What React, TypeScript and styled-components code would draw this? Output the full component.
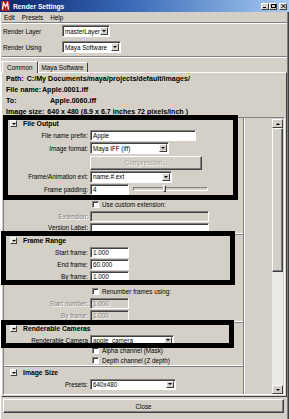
import React from 'react'
import styled, { createGlobalStyle } from 'styled-components'

const GlobalStyle = createGlobalStyle`
  html, body {
    margin: 0;
    padding: 0;
    background: #d4d0c8;
  }
  body {
    font-family: "Liberation Sans", Arial, sans-serif;
    font-size: 6.3px;
    color: #000;
  }
  * {
    box-sizing: border-box;
  }
`

const Window = styled.div`
  position: relative;
  width: 289px;
  height: 419px;
  overflow: hidden;
  display: flex;
  flex-direction: column;
  background: #d4d0c8;
  box-shadow: inset 1px 0 #fff, inset -1px 0 #404040, inset -2px 0 #808080;
`

const TitleBar = styled.div`
  height: 12px;
  flex: none;
  display: flex;
  align-items: center;
  padding: 0 2px 0 1px;
  background: linear-gradient(to right, #0a246a, #3a6ab8 45%, #a6caf0);
  color: #fff;
  font-weight: bold;
  font-size: 6.7px;
`

const TitleText = styled.span`
  margin-left: 3px;
  flex: 1;
`

const TitleButton = styled.div<{ $gap?: number }>`
  width: 8px;
  height: 7px;
  margin-left: ${p => p.$gap ?? 0}px;
  background: #d4d0c8;
  border-top: 1px solid #fff;
  border-left: 1px solid #fff;
  border-right: 1px solid #404040;
  border-bottom: 1px solid #404040;
  display: flex;
  align-items: center;
  justify-content: center;
`

const MenuBar = styled.div`
  height: 10px;
  flex: none;
  display: flex;
  align-items: center;
  gap: 7px;
  padding-left: 4px;
`

const Etched = styled.div`
  height: 2px;
  flex: none;
  margin: 0 2px;
  border-top: 1px solid #808080;
  border-bottom: 1px solid #fff;
`

const TopForm = styled.div`
  flex: none;
  display: flex;
  flex-direction: column;
  gap: 4px;
  padding: 1px 3px 3px;
`

const TopRow = styled.div`
  height: 12px;
  display: grid;
  grid-template-columns: 59px auto;
  align-items: center;
  justify-items: start;
`

const TabStrip = styled.div`
  flex: none;
  height: 13px;
  margin-top: 1px;
  display: flex;
  align-items: flex-end;
  padding-left: 2px;
`

const Tab = styled.div<{ $active?: boolean }>`
  position: relative;
  z-index: 1;
  height: ${p => (p.$active ? 12 : 10)}px;
  margin-bottom: ${p => (p.$active ? -1 : 0)}px;
  padding: ${p => (p.$active ? '2px 4px 0' : '1px 3px 0')};
  background: #d4d0c8;
  border-top: 1px solid #fff;
  border-left: 1px solid #fff;
  border-right: 1px solid #404040;
  border-top-right-radius: 1px;
`

const Panel = styled.div`
  flex: 1;
  display: flex;
  flex-direction: column;
  margin: 0 2px 0 1px;
  border-top: 1px solid #fff;
  border-left: 1px solid #fff;
  border-right: 1px solid #404040;
  border-bottom: 1px solid #404040;
  min-height: 0;
`

const Info = styled.div`
  flex: none;
  height: 44px;
  padding-left: 4px;
  font-weight: bold;
  font-size: 7.1px;
`

const InfoLine = styled.div`
  height: 11px;
  display: flex;
  align-items: center;
  white-space: nowrap;
`

const InfoKey = styled.span<{ $w?: number }>`
  display: inline-block;
  width: ${p => (p.$w ? `${p.$w}px` : 'auto')};
  margin-right: ${p => (p.$w ? 0 : 3)}px;
`

const ScrollView = styled.div`
  flex: 1;
  min-height: 0;
  display: flex;
  margin: 0 1px 1px 1px;
  border-top: 1px solid #808080;
  border-left: 1px solid #808080;
  border-bottom: 1px solid #fff;
  border-right: 1px solid #fff;
`

const Content = styled.div`
  flex: 1;
  overflow: hidden;
`

const Section = styled.div`
  width: 240px;
  border-right: 1px solid #808080;
  box-shadow: 1px 0 #fff;
  border-bottom: 1px solid #808080;
  &::after {
    content: '';
    display: block;
    height: 1px;
    background: #fff;
  }
`

const SectionHeader = styled.div`
  height: 11px;
  display: flex;
  align-items: center;
  gap: 6px;
  padding-left: 6px;
  font-weight: bold;
  font-size: 6.8px;
`

const Collapse = styled.div`
  width: 7px;
  height: 7px;
  background: #e8e6e0;
  border-top: 1px solid #fff;
  border-left: 1px solid #fff;
  border-right: 1px solid #404040;
  border-bottom: 1px solid #404040;
  display: flex;
  align-items: center;
  justify-content: center;
  &::before {
    content: '';
    border-left: 2px solid transparent;
    border-right: 2px solid transparent;
    border-top: 2px solid #000;
  }
`

const FormRow = styled.div<{ $h: number }>`
  height: ${p => p.$h}px;
  display: grid;
  grid-template-columns: 84px auto;
  column-gap: 2px;
  align-items: center;
  justify-items: start;
`

const Label = styled.span<{ $disabled?: boolean }>`
  justify-self: end;
  white-space: nowrap;
  color: ${p => (p.$disabled ? '#808080' : '#000')};
  text-shadow: ${p => (p.$disabled ? '1px 1px 0 #fff' : 'none')};
`

const Field = styled.div<{ $w: number; $h?: number; $disabled?: boolean }>`
  width: ${p => p.$w}px;
  height: ${p => p.$h ?? 11}px;
  display: flex;
  align-items: center;
  padding-left: 2px;
  background: ${p => (p.$disabled ? '#d4d0c8' : '#fff')};
  color: ${p => (p.$disabled ? '#808080' : '#000')};
  text-shadow: ${p => (p.$disabled ? '1px 1px 0 #fff' : 'none')};
  border-top: 1px solid #808080;
  border-left: 1px solid #808080;
  border-bottom: 1px solid #fff;
  border-right: 1px solid #fff;
  box-shadow: inset 1px 1px #404040;
  white-space: nowrap;
  overflow: hidden;
`

const Combo = styled(Field)`
  justify-content: space-between;
  padding-right: 1px;
`

const ArrowButton = styled.div`
  width: 8px;
  flex: none;
  height: calc(100% - 2px);
  background: #d4d0c8;
  border-top: 1px solid #fff;
  border-left: 1px solid #fff;
  border-right: 1px solid #404040;
  border-bottom: 1px solid #404040;
  display: flex;
  align-items: center;
  justify-content: center;
  &::before {
    content: '';
    border-left: 2px solid transparent;
    border-right: 2px solid transparent;
    border-top: 2px solid #000;
  }
`

const Button = styled.div<{ $w?: number; $disabled?: boolean }>`
  width: ${p => (p.$w ? `${p.$w}px` : '100%')};
  height: 14px;
  display: flex;
  align-items: center;
  justify-content: center;
  background: #d4d0c8;
  color: ${p => (p.$disabled ? '#a09c94' : '#000')};
  text-shadow: ${p => (p.$disabled ? '1px 1px 0 #fff' : 'none')};
  border-top: 1px solid #fff;
  border-left: 1px solid #fff;
  border-right: 1px solid #404040;
  border-bottom: 1px solid #404040;
  box-shadow: inset -1px -1px #808080;
`

const Inline = styled.div`
  display: flex;
  align-items: center;
  gap: 4px;
`

const Slider = styled.div`
  position: relative;
  width: 75px;
  height: 4px;
  border-top: 1px solid #808080;
  border-left: 1px solid #808080;
  border-bottom: 1px solid #fff;
  border-right: 1px solid #fff;
`

const Thumb = styled.div`
  position: absolute;
  top: -3px;
  width: 3px;
  height: 7px;
  background: #d4d0c8;
  border-top: 1px solid #fff;
  border-left: 1px solid #fff;
  border-right: 1px solid #404040;
  border-bottom: 1px solid #404040;
`

const CheckRow = styled.div<{ $h: number }>`
  height: ${p => p.$h}px;
  display: flex;
  align-items: center;
  gap: 3px;
  padding-left: 88px;
  white-space: nowrap;
  overflow: hidden;
`

const CheckBox = styled.div`
  width: 7px;
  height: 7px;
  flex: none;
  background: #fff;
  border-top: 1px solid #808080;
  border-left: 1px solid #808080;
  border-bottom: 1px solid #fff;
  border-right: 1px solid #fff;
  box-shadow: inset 1px 1px #404040;
`

const Spacer = styled.div<{ $h: number }>`
  height: ${p => p.$h}px;
`

const ScrollBar = styled.div`
  width: 11px;
  flex: none;
  margin-right: 1px;
  padding-top: 1px;
  display: flex;
  flex-direction: column;
`

const ScrollArrow = styled.div<{ $up?: boolean }>`
  height: 9px;
  flex: none;
  background: #d4d0c8;
  border-top: 1px solid #fff;
  border-left: 1px solid #fff;
  border-right: 1px solid #404040;
  border-bottom: 1px solid #404040;
  display: flex;
  align-items: center;
  justify-content: center;
  &::before {
    content: '';
    border-left: 2px solid transparent;
    border-right: 2px solid transparent;
    ${p => (p.$up ? 'border-bottom: 2px solid #000;' : 'border-top: 2px solid #000;')}
  }
`

const ScrollThumb = styled.div`
  height: 144px;
  flex: none;
  background: #d4d0c8;
  border-top: 1px solid #fff;
  border-left: 1px solid #fff;
  border-right: 1px solid #404040;
  border-bottom: 1px solid #404040;
  box-shadow: inset -1px -1px #808080;
`

const ScrollTrack = styled.div`
  flex: 1;
  background: #eceae4;
`

const CloseBar = styled.div`
  flex: none;
  height: 22px;
  padding: 2px 5px 5px 3px;
`

const Highlight = styled.div<{ $x: number; $y: number; $w: number; $h: number }>`
  position: absolute;
  left: ${p => p.$x}px;
  top: ${p => p.$y}px;
  width: ${p => p.$w}px;
  height: ${p => p.$h}px;
  border: 5px solid #000;
  pointer-events: none;
`

function Dropdown({ w, value, h }: { w: number; value: string; h?: number }) {
  return (
    <Combo $w={w} $h={h}>
      <span>{value}</span>
      <ArrowButton />
    </Combo>
  )
}

function MayaIcon() {
  return (
    <svg width="9" height="10" viewBox="0 0 9 10">
      <rect x="0" y="0" width="9" height="10" fill="#b22222" />
      <path d="M1.5 8.5 L2.5 2 L4.5 5.5 L6.5 2 L7.5 8.5" fill="none" stroke="#fff" strokeWidth="1.3" />
    </svg>
  )
}

export default function App() {
  return (
    <Window>
      <GlobalStyle />
      <TitleBar>
        <MayaIcon />
        <TitleText>Render Settings</TitleText>
        <TitleButton>
          <svg width="4" height="4" viewBox="0 0 4 4">
            <rect x="0" y="3" width="3" height="1" fill="#000" />
          </svg>
        </TitleButton>
        <TitleButton>
          <svg width="5" height="4" viewBox="0 0 5 4">
            <rect x="0.5" y="0.5" width="4" height="3" fill="none" stroke="#000" />
            <rect x="0" y="0" width="5" height="1" fill="#000" />
          </svg>
        </TitleButton>
        <TitleButton $gap={2}>
          <svg width="5" height="4" viewBox="0 0 5 4">
            <path d="M0.5 0 L4.5 4 M4.5 0 L0.5 4" stroke="#000" strokeWidth="1" />
          </svg>
        </TitleButton>
      </TitleBar>

      <MenuBar>
        <span>Edit</span>
        <span>Presets</span>
        <span>Help</span>
      </MenuBar>
      <Etched />

      <TopForm>
        <TopRow>
          <span>Render Layer</span>
          <Dropdown w={48} h={12} value="masterLayer" />
        </TopRow>
        <TopRow>
          <span>Render Using</span>
          <Dropdown w={59} h={12} value="Maya Software" />
        </TopRow>
      </TopForm>
      <Etched />

      <TabStrip>
        <Tab $active>Common</Tab>
        <Tab>Maya Software</Tab>
      </TabStrip>

      <Panel>
        <Info>
          <InfoLine>
            <InfoKey>Path:</InfoKey>C:/My Documents/maya/projects/default/images/
          </InfoLine>
          <InfoLine>
            <InfoKey $w={36}>File name:</InfoKey>Apple.0001.iff
          </InfoLine>
          <InfoLine>
            <InfoKey $w={44}>To:</InfoKey>Apple.0060.iff
          </InfoLine>
          <InfoLine>
            <InfoKey>Image size:</InfoKey>640 x 480 (8.9 x 6.7 inches 72 pixels/inch )
          </InfoLine>
        </Info>

        <ScrollView>
          <Content>
            <Section>
              <SectionHeader>
                <Collapse />
                File Output
              </SectionHeader>
              <FormRow $h={12}>
                <Label>File name prefix:</Label>
                <Field $w={106}>Apple</Field>
              </FormRow>
              <FormRow $h={14}>
                <Label>Image format:</Label>
                <Dropdown w={79} h={12} value="Maya IFF (iff)" />
              </FormRow>
              <FormRow $h={15}>
                <span />
                <Button $w={112} $disabled>
                  Compression...
                </Button>
              </FormRow>
              <FormRow $h={13}>
                <Label>Frame/Animation ext:</Label>
                <Dropdown w={82} h={12} value="name.#.ext" />
              </FormRow>
              <FormRow $h={12}>
                <Label>Frame padding:</Label>
                <Inline>
                  <Field $w={39}>4</Field>
                  <Slider>
                    <Thumb style={{ left: 29 }} />
                  </Slider>
                </Inline>
              </FormRow>
              <Spacer $h={4} />
              <CheckRow $h={11}>
                <CheckBox />
                Use custom extension:
              </CheckRow>
              <FormRow $h={12}>
                <Label $disabled>Extension:</Label>
                <Field $w={119} $disabled />
              </FormRow>
              <FormRow $h={11}>
                <Label>Version Label:</Label>
                <Field $w={119} $h={10} />
              </FormRow>
            </Section>

            <Section>
              <SectionHeader>
                <Collapse />
                Frame Range
              </SectionHeader>
              <FormRow $h={12}>
                <Label>Start frame:</Label>
                <Field $w={39}>1.000</Field>
              </FormRow>
              <FormRow $h={12}>
                <Label>End frame:</Label>
                <Field $w={39}>60.000</Field>
              </FormRow>
              <FormRow $h={12}>
                <Label>By frame:</Label>
                <Field $w={39}>1.000</Field>
              </FormRow>
              <Spacer $h={3} />
              <CheckRow $h={12}>
                <CheckBox />
                Renumber frames using:
              </CheckRow>
              <FormRow $h={12}>
                <Label $disabled>Start number:</Label>
                <Field $w={39} $disabled>
                  1.000
                </Field>
              </FormRow>
              <FormRow $h={12}>
                <Label $disabled>By frame:</Label>
                <Field $w={39} $disabled>
                  1.000
                </Field>
              </FormRow>
            </Section>

            <Section>
              <SectionHeader>
                <Collapse />
                Renderable Cameras
              </SectionHeader>
              <FormRow $h={12}>
                <Label>Renderable Camera</Label>
                <Dropdown w={84} value="apple_camera" />
              </FormRow>
              <CheckRow $h={9}>
                <CheckBox />
                Alpha channel (Mask)
              </CheckRow>
              <CheckRow $h={10}>
                <CheckBox />
                Depth channel (Z depth)
              </CheckRow>
            </Section>

            <Section>
              <SectionHeader>
                <Collapse />
                Image Size
              </SectionHeader>
              <FormRow $h={12}>
                <Label>Presets:</Label>
                <Dropdown w={86} value="640x480" />
              </FormRow>
              <Spacer $h={20} />
            </Section>
          </Content>

          <ScrollBar>
            <ScrollArrow $up />
            <ScrollThumb />
            <ScrollTrack />
            <ScrollArrow />
          </ScrollBar>
        </ScrollView>
      </Panel>

      <CloseBar>
        <Button>Close</Button>
      </CloseBar>

      <Highlight $x={3} $y={115} $w={235} $h={85} />
      <Highlight $x={1} $y={231} $w={234} $h={54} />
      <Highlight $x={1} $y={320} $w={233} $h={28} />
    </Window>
  )
}
